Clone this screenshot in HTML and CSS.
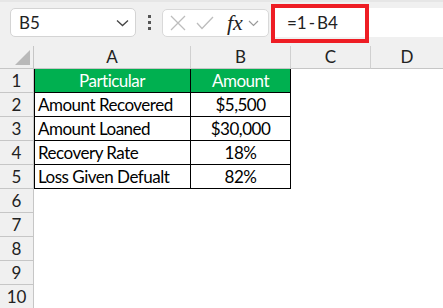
FILE: index.html
```html
<!DOCTYPE html>
<html lang="en">
<head>
    <meta charset="UTF-8">
    <meta name="viewport" content="width=device-width, initial-scale=1.0">
    <title>Loss Given Default</title>
    <link rel="stylesheet" href="styles.css">
</head>
<body>
    <div class="toolbar">
        <div class="name-box">
            <span>B5</span>
            <svg class="chevron" width="13" height="8" viewBox="0 0 13 8"><path d="M1 1.5 L6.5 6.5 L12 1.5" fill="none" stroke="#444" stroke-width="1.3"/></svg>
        </div>
        <div class="grip"><i></i><i></i><i></i></div>
        <div class="fx-group">
            <svg width="16" height="16" viewBox="0 0 16 16"><path d="M1 1 L15 15 M15 1 L1 15" stroke="#bdbdbd" stroke-width="1.3"/></svg>
            <svg width="18" height="14" viewBox="0 0 18 14"><path d="M1 7 L6 12.5 L17 1" fill="none" stroke="#bdbdbd" stroke-width="1.3"/></svg>
            <span class="fx">fx</span>
            <svg width="11" height="7" viewBox="0 0 11 7"><path d="M1 1 L5.5 5.5 L10 1" fill="none" stroke="#9a9a9a" stroke-width="1.2"/></svg>
        </div>
        <div class="formula-bar">
            <div class="formula">=1<span class="minus">-</span>B4</div>
        </div>
    </div>

    <div class="sheet">
        <div class="corner"><div class="triangle"></div></div>
        <div class="col-head">A</div>
        <div class="col-head">B</div>
        <div class="col-head">C</div>
        <div class="col-head last">D</div>

        <div class="row-head">1</div>
        <div class="cell head first">Particular</div>
        <div class="cell head">Amount</div>
        <div class="blank"></div>
        <div class="blank"></div>

        <div class="row-head">2</div>
        <div class="cell first left">Amount Recovered</div>
        <div class="cell">$5,500</div>
        <div class="blank"></div>
        <div class="blank"></div>

        <div class="row-head">3</div>
        <div class="cell first left">Amount Loaned</div>
        <div class="cell">$30,000</div>
        <div class="blank"></div>
        <div class="blank"></div>

        <div class="row-head">4</div>
        <div class="cell first left">Recovery Rate</div>
        <div class="cell">18%</div>
        <div class="blank"></div>
        <div class="blank"></div>

        <div class="row-head">5</div>
        <div class="cell first left">Loss Given Defualt</div>
        <div class="cell">82%</div>
        <div class="blank"></div>
        <div class="blank"></div>

        <div class="row-head">6</div>
        <div class="blank"></div><div class="blank"></div><div class="blank"></div><div class="blank"></div>
        <div class="row-head">7</div>
        <div class="blank"></div><div class="blank"></div><div class="blank"></div><div class="blank"></div>
        <div class="row-head">8</div>
        <div class="blank"></div><div class="blank"></div><div class="blank"></div><div class="blank"></div>
        <div class="row-head">9</div>
        <div class="blank"></div><div class="blank"></div><div class="blank"></div><div class="blank"></div>
        <div class="row-head">10</div>
        <div class="blank"></div><div class="blank"></div><div class="blank"></div><div class="blank"></div>
    </div>
</body>
</html>
```

FILE: styles.css
```css
* {
    box-sizing: border-box;
}
body {
    margin: 0;
    width: 443px;
    height: 308px;
    overflow: hidden;
    font-family: Lato, "Liberation Sans", sans-serif;
    background-color: #ffffff;
    color: #111;
}
.toolbar {
    height: 46px;
    background-color: #f0f0f0;
    border-top: 2px solid #e6e6e6;
    display: flex;
    align-items: flex-start;
    padding-top: 6px;
}
.name-box {
    margin-left: 10px;
    width: 126px;
    height: 29px;
    background-color: #fff;
    border: 1px solid #d4d4d4;
    border-radius: 5px;
    display: flex;
    align-items: center;
    justify-content: space-between;
    padding: 0 6px 0 8px;
    font-size: 17px;
    color: #222;
}
.grip {
    width: 26px;
    height: 29px;
    display: flex;
    flex-direction: column;
    align-items: center;
    justify-content: center;
    gap: 3px;
}
.grip i {
    width: 3px;
    height: 3px;
    background-color: #555;
}
.fx-group {
    width: 107px;
    height: 28px;
    margin-top: 1px;
    background-color: #fff;
    border: 1px solid #d9d9d9;
    border-radius: 5px;
    display: flex;
    align-items: center;
    padding: 0 4px 0 7px;
    gap: 10px;
}
.fx-group .fx {
    font-family: "Liberation Serif", serif;
    font-style: italic;
    font-size: 22px;
    color: #222;
    margin-left: 3px;
    margin-right: -5px;
}
.formula-bar {
    flex: 1;
    margin-left: 2px;
    height: 29px;
    background-color: #fff;
    position: relative;
}
.formula {
    position: absolute;
    left: 0;
    top: -4px;
    width: 98px;
    height: 39px;
    border: 4px solid #ee1d24;
    padding-left: 12px;
    font-size: 17px;
    line-height: 30px;
    color: #222;
}
.formula .minus {
    margin: 0 2px;
}
.sheet {
    display: grid;
    grid-template-columns: 34px 157px 100px 80px 1fr;
    grid-template-rows: 23px repeat(10, 24px);
}
.corner {
    background-color: #f0f0f0;
    border-right: 1px solid #c6c6c6;
    border-bottom: 1px solid #c6c6c6;
    position: relative;
}
.triangle {
    position: absolute;
    right: 3px;
    bottom: 3px;
    width: 0;
    height: 0;
    border-left: 15px solid transparent;
    border-bottom: 15px solid #b9b9b9;
}
.col-head {
    background-color: #f0f0f0;
    border-right: 1px solid #d0d0d0;
    border-bottom: 1px solid #c6c6c6;
    text-align: center;
    font-size: 17px;
    line-height: 22px;
    color: #222;
}
.col-head.last {
    border-right: none;
}
.row-head {
    background-color: #f0f0f0;
    border-right: 1px solid #c6c6c6;
    border-bottom: 1px solid #c6c6c6;
    text-align: center;
    font-size: 17px;
    line-height: 23px;
    color: #222;
}
.cell {
    border-right: 1px solid #000;
    border-bottom: 1px solid #000;
    text-align: center;
    font-size: 17px;
    line-height: 23px;
    letter-spacing: -0.5px;
    color: #000;
    white-space: nowrap;
}
.cell.first {
    box-shadow: inset 1px 0 0 #000;
}
.cell.left {
    text-align: left;
    padding-left: 4px;
}
.cell.head {
    background-color: #00b050;
    color: #fff;
}
```
